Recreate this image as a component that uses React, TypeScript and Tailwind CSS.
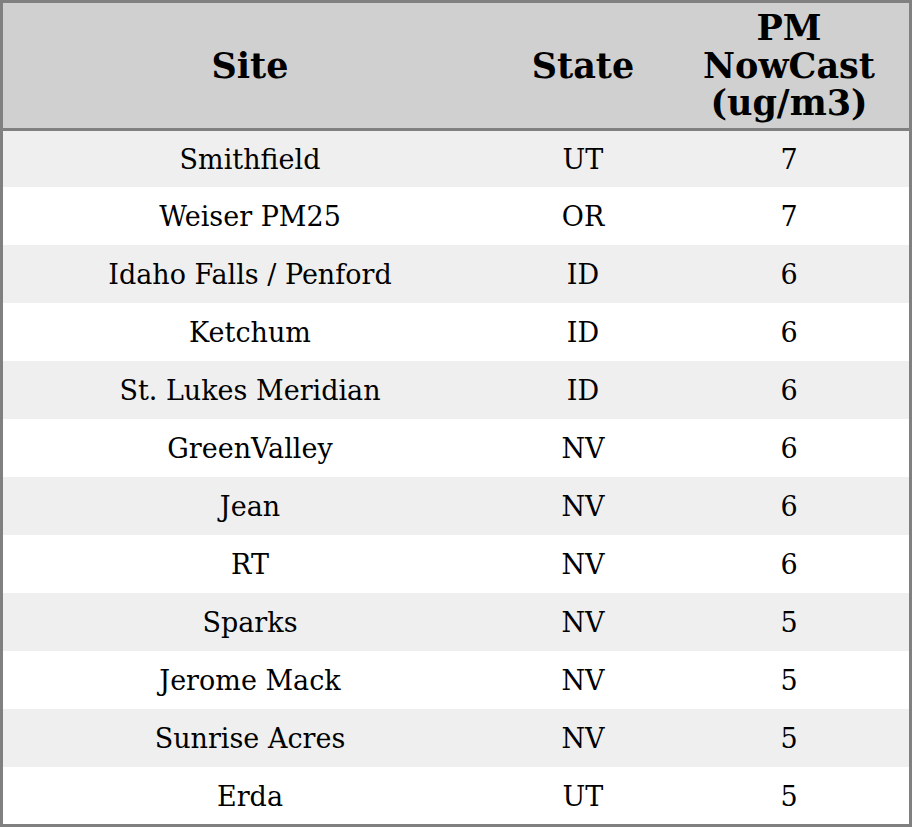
import React from "react";

const rows: [string, string, string][] = [
  ["Smithfield", "UT", "7"],
  ["Weiser PM25", "OR", "7"],
  ["Idaho Falls / Penford", "ID", "6"],
  ["Ketchum", "ID", "6"],
  ["St. Lukes Meridian", "ID", "6"],
  ["GreenValley", "NV", "6"],
  ["Jean", "NV", "6"],
  ["RT", "NV", "6"],
  ["Sparks", "NV", "5"],
  ["Jerome Mack", "NV", "5"],
  ["Sunrise Acres", "NV", "5"],
  ["Erda", "UT", "5"],
];

export default function App() {
  return (
    <div
      className="w-[912px] h-[827px] border-[3px] border-[#808080] bg-white flex flex-col text-black"
      style={{ fontFamily: '"DejaVu Serif", serif' }}
    >
      <div className="h-[128px] shrink-0 bg-[#d0d0d0] border-b-[3px] border-[#808080] grid grid-cols-[494px_172px_240px] items-center text-center font-bold text-[35px] leading-[37.5px]">
        <div>Site</div>
        <div>State</div>
        <div>
          PM
          <br />
          NowCast
          <br />
          (ug/m3)
        </div>
      </div>
      {rows.map((r, i) => (
        <div
          key={i}
          className={`${
            i === 0 ? "h-[56px]" : i === rows.length - 1 ? "h-[57px]" : "h-[58px]"
          } shrink-0 pt-[3px] grid grid-cols-[494px_172px_240px] items-center text-center text-[27px] ${
            i % 2 === 0 ? "bg-[#efefef]" : "bg-white"
          }`}
        >
          <div>{r[0]}</div>
          <div>{r[1]}</div>
          <div>{r[2]}</div>
        </div>
      ))}
    </div>
  );
}
